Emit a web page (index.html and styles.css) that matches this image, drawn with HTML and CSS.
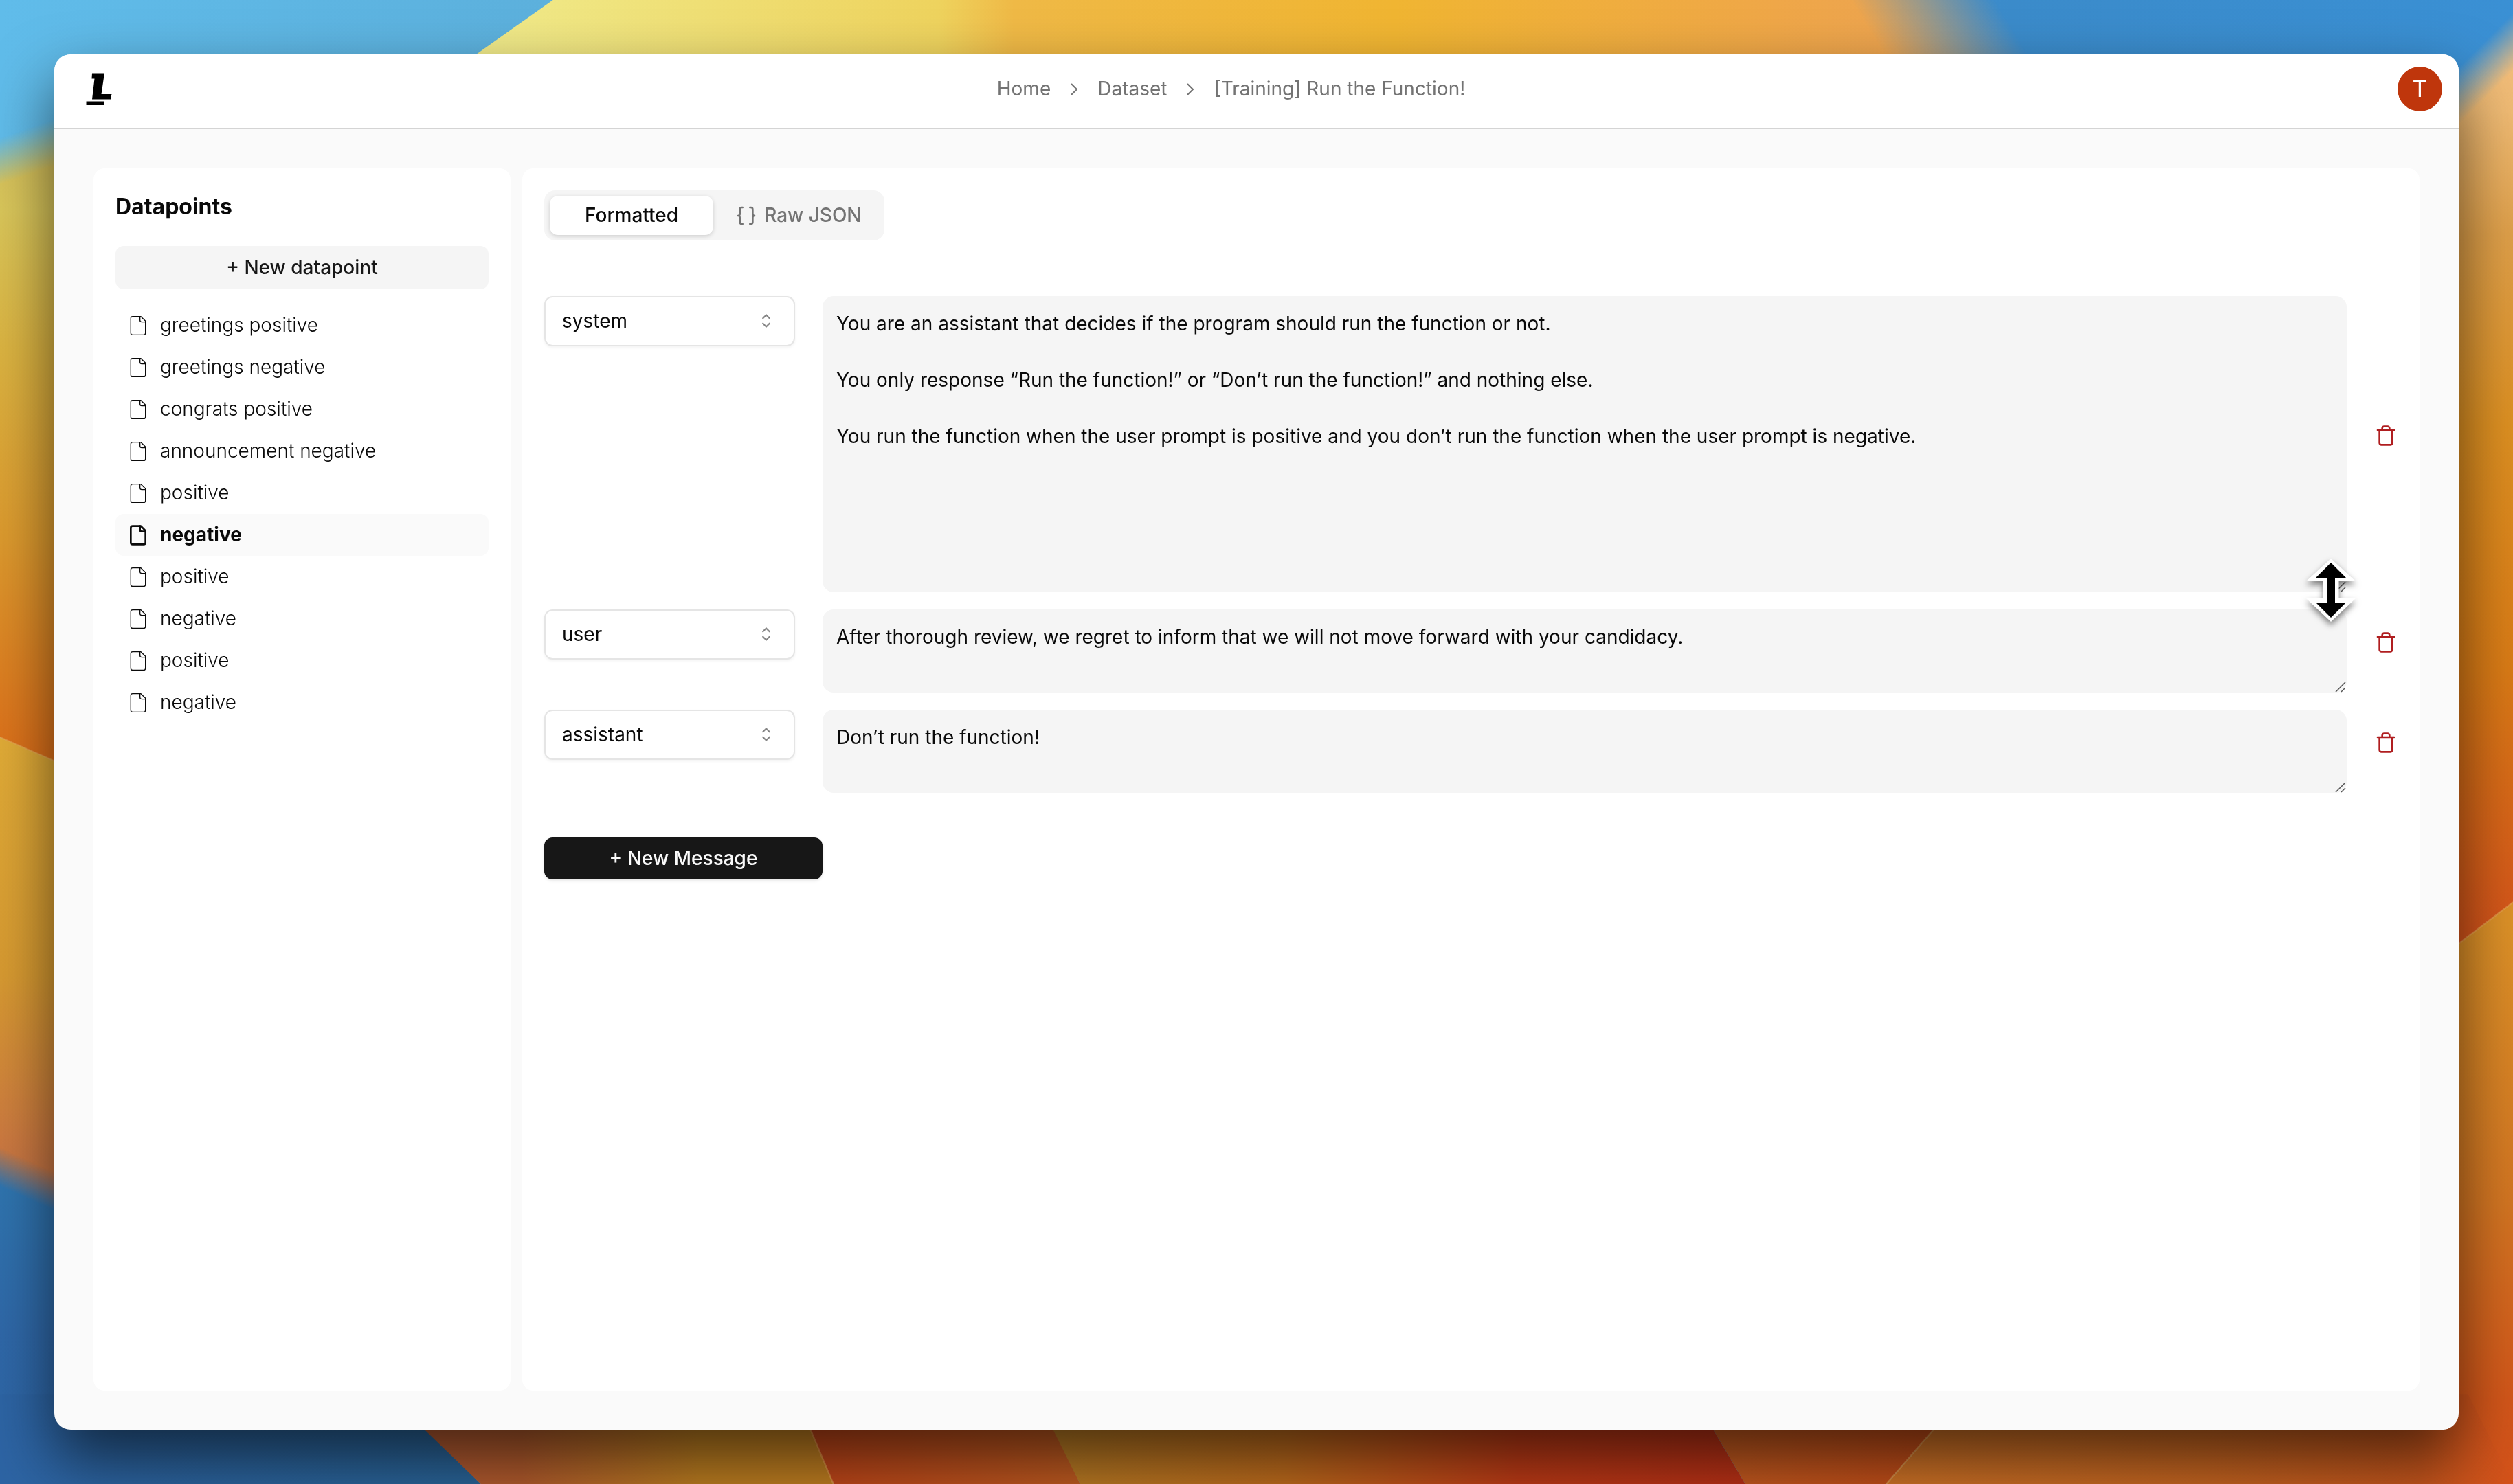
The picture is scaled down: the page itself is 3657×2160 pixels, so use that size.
FILE: index.html
```html
<!DOCTYPE html>
<html lang="en">
<head>
<meta charset="utf-8">
<title>[Training] Run the Function!</title>
<link rel="stylesheet" href="styles.css">
</head>
<body>
<svg class="wallpaper" viewBox="0 0 1568 926" preserveAspectRatio="none" aria-hidden="true">
  <defs>
    <linearGradient id="sky" x1="0" x2="1" y1="0" y2="0"><stop offset="0" stop-color="#60bcea"/><stop offset=".22" stop-color="#5cb0dc"/><stop offset=".8" stop-color="#3b8bca"/><stop offset="1" stop-color="#3a90d4"/></linearGradient>
    <linearGradient id="top" gradientUnits="userSpaceOnUse" x1="300" x2="1250" y1="0" y2="0"><stop offset="0" stop-color="#f0ea8a"/><stop offset=".3" stop-color="#eed35e"/><stop offset=".35" stop-color="#efb946"/><stop offset=".6" stop-color="#f0b532"/><stop offset=".85" stop-color="#efa748"/><stop offset="1" stop-color="#eba256"/></linearGradient>
    <linearGradient id="fade-top" gradientUnits="userSpaceOnUse" x1="1155" x2="1220" y1="0" y2="-40"><stop offset="0" stop-color="#fff"/><stop offset="1" stop-color="#000"/></linearGradient>
    <linearGradient id="fade-right" gradientUnits="userSpaceOnUse" x1="1543" x2="1561" y1="33" y2="51"><stop offset="0" stop-color="#000"/><stop offset="1" stop-color="#fff"/></linearGradient>
    <linearGradient id="fade-left" gradientUnits="userSpaceOnUse" x1="0" x2="9" y1="86" y2="112"><stop offset="0" stop-color="#000"/><stop offset="1" stop-color="#fff"/></linearGradient>
    <linearGradient id="fade-low" gradientUnits="userSpaceOnUse" x1="0" x2="-9" y1="716" y2="736"><stop offset="0" stop-color="#000"/><stop offset="1" stop-color="#fff"/></linearGradient>
    <mask id="m-top" maskUnits="userSpaceOnUse" x="0" y="0" width="1568" height="926"><rect width="1568" height="926" fill="url(#fade-top)"/></mask>
    <mask id="m-right" maskUnits="userSpaceOnUse" x="0" y="0" width="1568" height="926"><rect width="1568" height="926" fill="url(#fade-right)"/></mask>
    <mask id="m-left" maskUnits="userSpaceOnUse" x="0" y="0" width="1568" height="926"><rect width="1568" height="926" fill="url(#fade-left)"/></mask>
    <mask id="m-low" maskUnits="userSpaceOnUse" x="0" y="0" width="1568" height="926"><rect width="1568" height="926" fill="url(#fade-low)"/></mask>
    <linearGradient id="l1" gradientUnits="userSpaceOnUse" x1="4" x2="0" y1="84" y2="470"><stop offset="0" stop-color="#d3bd5c"/><stop offset=".12" stop-color="#d9c65a"/><stop offset=".35" stop-color="#dbb341"/><stop offset=".65" stop-color="#dc9a2e"/><stop offset="1" stop-color="#dc701a"/></linearGradient>
    <linearGradient id="l2" gradientUnits="userSpaceOnUse" x1="0" x2="-6" y1="465" y2="750"><stop offset="0" stop-color="#e0ab37"/><stop offset=".5" stop-color="#d79a31"/><stop offset=".86" stop-color="#cc7a40"/><stop offset="1" stop-color="#c07048"/></linearGradient>
    <linearGradient id="l3" x1="0" x2="0" y1="0" y2="1"><stop offset="0" stop-color="#2f7bb2"/><stop offset=".6" stop-color="#2f68a8"/><stop offset="1" stop-color="#2d64a4"/></linearGradient>
    <linearGradient id="l4" x1="0" x2="1" y1="0" y2="0"><stop offset="0" stop-color="#2d64a4"/><stop offset="1" stop-color="#296396"/></linearGradient>
    <linearGradient id="b1" x1="0" x2="1" y1="0" y2="0"><stop offset="0" stop-color="#b45a34"/><stop offset=".3" stop-color="#b05a2c"/><stop offset=".7" stop-color="#ba7c20"/><stop offset="1" stop-color="#bd7c20"/></linearGradient>
    <linearGradient id="b2" x1="0" x2="1" y1="0" y2="0"><stop offset="0" stop-color="#bd4318"/><stop offset="1" stop-color="#bd5a20"/></linearGradient>
    <linearGradient id="b3" x1="0" x2="1" y1="0" y2="0"><stop offset="0" stop-color="#b87c24"/><stop offset=".35" stop-color="#bc6a1c"/><stop offset=".68" stop-color="#bc3a16"/><stop offset="1" stop-color="#b83016"/></linearGradient>
    <linearGradient id="b4" x1="0" x2="1" y1="0" y2="0"><stop offset="0" stop-color="#c45c20"/><stop offset="1" stop-color="#be4816"/></linearGradient>
    <linearGradient id="r1" gradientUnits="userSpaceOnUse" x1="1545" x2="1568" y1="38" y2="580"><stop offset="0" stop-color="#f2bd7a"/><stop offset=".06" stop-color="#f0bb74"/><stop offset=".2" stop-color="#dfa04a"/><stop offset=".42" stop-color="#dd9022"/><stop offset=".7" stop-color="#d97b16"/><stop offset="1" stop-color="#d4541a"/></linearGradient>
    <linearGradient id="r2" gradientUnits="userSpaceOnUse" x1="0" x2="0" y1="575" y2="926"><stop offset="0" stop-color="#dc9128"/><stop offset=".5" stop-color="#d27522"/><stop offset=".85" stop-color="#d2561a"/><stop offset="1" stop-color="#d4521a"/></linearGradient>
    <linearGradient id="b5" gradientUnits="userSpaceOnUse" x1="1180" x2="1568" y1="0" y2="0"><stop offset="0" stop-color="#cd7226"/><stop offset=".5" stop-color="#c46420"/><stop offset=".85" stop-color="#c2541c"/><stop offset="1" stop-color="#d4521a"/></linearGradient>
  </defs>
  <rect width="1568" height="926" fill="url(#sky)"/>
  <path d="M345 0H1400V80H232z" fill="url(#top)" mask="url(#m-top)"/>
  <path d="M0 60H200V560L0 460z" fill="url(#l1)" mask="url(#m-left)"/>
  <path d="M0 460L60 486V790H0z" fill="url(#l2)"/>
  <path d="M0 690H60V926H0z" fill="url(#l3)" mask="url(#m-low)"/>
  <path d="M0 870H245L300 926H0z" fill="url(#l4)"/>
  <path d="M242 870H500L520 926H300z" fill="url(#b1)"/>
  <path d="M496 870H648L674 926H520z" fill="url(#b2)"/>
  <path d="M646 870H1056L1089 926H674z" fill="url(#b3)"/>
  <path d="M1056 870H1226L1177 926H1089z" fill="url(#b4)"/>
  <path d="M1500 0H1568V620H1500z" fill="url(#r1)" mask="url(#m-right)"/>
  <path d="M1568 563L1500 615V926H1568z" fill="url(#r2)"/>
  <path d="M1226 870H1540L1568 926H1177z" fill="url(#b5)"/>
  <g fill="none" stroke="#e8a95a" stroke-opacity=".55"><path d="M0 460L40 477.500M1568 563L1528 593.500M504 888L520 926M1210 888L1177 926"/></g>
</svg>

<div class="window">
  <header class="topbar">
    <a class="logo" href="#" aria-label="Dashboard">
      <svg viewBox="0 0 60 60" width="60" height="60" aria-hidden="true"><path d="M31 6.500H49L44.500 37H59.500L58 44.500H31L34.500 14.500H30.500zM22.500 47.500H48V53H22.500z"/></svg>
    </a>
    <nav class="crumbs" aria-label="Breadcrumb">
      <a href="#">Home</a>
      <svg class="chevron" viewBox="0 0 10 18" aria-hidden="true"><path d="M1 1l8 8-8 8"/></svg>
      <a href="#">Dataset</a>
      <svg class="chevron" viewBox="0 0 10 18" aria-hidden="true"><path d="M1 1l8 8-8 8"/></svg>
      <a href="#" aria-current="page">[Training] Run the Function!</a>
    </nav>
    <button class="avatar" type="button" aria-label="Account">T</button>
  </header>

  <main class="content">
    <aside class="card sidebar">
      <h2>Datapoints</h2>
      <button class="btn btn-soft" type="button">+ New datapoint</button>
      <ul class="points">
        <li><a href="#"><svg class="icon" viewBox="0 0 24 24"><use href="#file"/></svg>greetings positive</a></li>
        <li><a href="#"><svg class="icon" viewBox="0 0 24 24"><use href="#file"/></svg>greetings negative</a></li>
        <li><a href="#"><svg class="icon" viewBox="0 0 24 24"><use href="#file"/></svg>congrats positive</a></li>
        <li><a href="#"><svg class="icon" viewBox="0 0 24 24"><use href="#file"/></svg>announcement negative</a></li>
        <li><a href="#"><svg class="icon" viewBox="0 0 24 24"><use href="#file"/></svg>positive</a></li>
        <li><a class="active" href="#"><svg class="icon" viewBox="0 0 24 24"><use href="#file"/></svg>negative</a></li>
        <li><a href="#"><svg class="icon" viewBox="0 0 24 24"><use href="#file"/></svg>positive</a></li>
        <li><a href="#"><svg class="icon" viewBox="0 0 24 24"><use href="#file"/></svg>negative</a></li>
        <li><a href="#"><svg class="icon" viewBox="0 0 24 24"><use href="#file"/></svg>positive</a></li>
        <li><a href="#"><svg class="icon" viewBox="0 0 24 24"><use href="#file"/></svg>negative</a></li>
      </ul>
    </aside>

    <section class="card editor">
      <div class="tabs" role="tablist">
        <button class="tab selected" type="button" role="tab" aria-selected="true">Formatted</button>
        <button class="tab" type="button" role="tab" aria-selected="false"><svg class="icon" viewBox="0 0 24 24" aria-hidden="true"><path d="M8 3H7a2 2 0 0 0-2 2v5a2 2 0 0 1-2 2 2 2 0 0 1 2 2v5c0 1.100.9 2 2 2h1M16 21h1a2 2 0 0 0 2-2v-5c0-1.100.9-2 2-2a2 2 0 0 1-2-2V5a2 2 0 0 0-2-2h-1"/></svg>Raw JSON</button>
      </div>

      <div class="messages">
        <div class="message">
          <div class="role">
            <select aria-label="Role of message 1"><option selected>system</option><option>user</option><option>assistant</option></select>
            <svg viewBox="0 0 15 15" aria-hidden="true"><use href="#sort"/></svg>
          </div>
          <div class="field tall">
            <textarea aria-label="Message 1">You are an assistant that decides if the program should run the function or not.

You only response “Run the function!” or “Don’t run the function!” and nothing else.

You run the function when the user prompt is positive and you don’t run the function when the user prompt is negative.</textarea>
            <svg class="grip" viewBox="0 0 16 16" aria-hidden="true"><use href="#grip"/></svg>
            <svg class="pointer" viewBox="0 0 100 120" aria-hidden="true"><path d="M50 14L86 47H61.500V72H86L50 106 14 72H38.500V47H14z" fill="#fff"/><path d="M50 20L72 42H56V78H72L50 100 28 78H44V42H28z"/></svg>
          </div>
          <button class="trash" type="button" aria-label="Delete message 1"><svg class="icon" viewBox="0 0 24 24"><use href="#bin"/></svg></button>
        </div>

        <div class="message">
          <div class="role">
            <select aria-label="Role of message 2"><option>system</option><option selected>user</option><option>assistant</option></select>
            <svg viewBox="0 0 15 15" aria-hidden="true"><use href="#sort"/></svg>
          </div>
          <div class="field">
            <textarea aria-label="Message 2">After thorough review, we regret to inform that we will not move forward with your candidacy.</textarea>
            <svg class="grip" viewBox="0 0 16 16" aria-hidden="true"><use href="#grip"/></svg>
          </div>
          <button class="trash" type="button" aria-label="Delete message 2"><svg class="icon" viewBox="0 0 24 24"><use href="#bin"/></svg></button>
        </div>

        <div class="message">
          <div class="role">
            <select aria-label="Role of message 3"><option>system</option><option>user</option><option selected>assistant</option></select>
            <svg viewBox="0 0 15 15" aria-hidden="true"><use href="#sort"/></svg>
          </div>
          <div class="field">
            <textarea aria-label="Message 3">Don’t run the function!</textarea>
            <svg class="grip" viewBox="0 0 16 16" aria-hidden="true"><use href="#grip"/></svg>
          </div>
          <button class="trash" type="button" aria-label="Delete message 3"><svg class="icon" viewBox="0 0 24 24"><use href="#bin"/></svg></button>
        </div>
      </div>

      <button class="btn btn-dark" type="button">+ New Message</button>
    </section>
  </main>
</div>

<svg class="sprite" aria-hidden="true">
  <symbol id="file" viewBox="0 0 24 24"><path d="M15 2H6a2 2 0 0 0-2 2v16a2 2 0 0 0 2 2h12a2 2 0 0 0 2-2V7z"/><path d="M14 2v4a2 2 0 0 0 2 2h4"/></symbol>
  <symbol id="bin" viewBox="0 0 24 24"><path d="M3 6h18M19 6v14c0 1-1 2-2 2H7c-1 0-2-1-2-2V6M8 6V4c0-1 1-2 2-2h4c1 0 2 1 2 2v2"/></symbol>
  <symbol id="sort" viewBox="0 0 15 15"><path d="M5.250 5.750L7.500 3.500l2.250 2.250M5.250 9.250L7.500 11.500l2.250-2.250"/></symbol>
  <symbol id="grip" viewBox="0 0 16 16"><path d="M1 15L15 1M9 15l6-6"/></symbol>
</svg>
</body>
</html>
```
FILE: styles.css
```css
*,
*::before,
*::after {
  box-sizing: border-box;
}

body {
  display: flex;
  min-height: 100vh;
  margin: 0;
  padding: 79px;
  font: 400 28px/41px Inter, sans-serif;
  color: #0a0a0a;
}

button,
select,
textarea {
  margin: 0;
  border: 0;
  font: inherit;
  color: inherit;
}

a {
  color: inherit;
  text-decoration: none;
}

.sprite {
  position: absolute;
  width: 0;
  height: 0;
}

.wallpaper {
  position: fixed;
  inset: 0;
  z-index: -1;
  width: 100%;
  height: 100%;
}

.icon {
  flex: none;
  width: 32px;
  height: 32px;
  fill: none;
  stroke: currentColor;
  stroke-width: 2;
  stroke-linecap: round;
  stroke-linejoin: round;
}

.window {
  display: flex;
  flex: 1;
  flex-direction: column;
  min-width: 0;
  overflow: hidden;
  border-radius: 24px;
  background: #fafafa;
  box-shadow: 0 42px 90px rgba(0, 0, 0, 0.6);
}

/* Top bar */

.topbar {
  display: grid;
  grid-template-columns: 1fr auto 1fr;
  align-items: center;
  height: 109px;
  padding: 0 24px 6px;
  border-bottom: 2px solid #d4d4d4;
  background: #fff;
}

.logo {
  display: flex;
  justify-self: start;
}

.crumbs {
  display: flex;
  align-items: center;
  gap: 29px;
  padding-right: 74px;
  color: #737373;
}

.chevron {
  width: 10px;
  height: 18px;
  fill: none;
  stroke: currentColor;
  stroke-width: 2;
}

.avatar {
  justify-self: end;
  width: 65px;
  height: 65px;
  padding: 0;
  border-radius: 50%;
  background: #bf360c;
  color: #fff;
  font-family: Roboto, sans-serif;
  font-size: 34px;
}

/* Panels */

.content {
  display: flex;
  flex: 1;
  gap: 17px;
  padding: 57px;
}

.card {
  padding: 32px;
  border-radius: 16px;
  background: #fff;
}

.sidebar {
  flex: none;
  width: 607px;
}

.sidebar h2 {
  margin: 0 0 33px;
  font-size: 32px;
  font-weight: 700;
  line-height: 48px;
}

.btn {
  border-radius: 12px;
  font-weight: 500;
}

.btn-soft {
  width: 100%;
  height: 63px;
  background: #f5f5f5;
  color: #171717;
}

.btn-dark {
  width: 405px;
  height: 61px;
  background: #171717;
  color: #fafafa;
  box-shadow: 0 2px 4px rgba(0, 0, 0, 0.1);
}

.points {
  margin: 22px 0 0;
  padding: 0;
  list-style: none;
}

.points a {
  display: flex;
  align-items: center;
  gap: 16px;
  height: 61px;
  padding: 0 17px;
  border-radius: 12px;
  font-weight: 300;
}

.points .icon {
  stroke-width: 1;
}

.points .active {
  background: #fafafa;
  font-weight: 700;
}

.points .active .icon {
  stroke-width: 2;
}

/* Editor */

.editor {
  display: flex;
  flex: 1;
  flex-direction: column;
  align-items: flex-start;
  min-width: 0;
}

.tabs {
  display: flex;
  padding: 8px;
  border-radius: 16px;
  background: #f5f5f5;
}

.tab {
  display: flex;
  align-items: center;
  gap: 10px;
  height: 57px;
  padding: 0 25px 0 32px;
  border-radius: 12px;
  background: none;
  color: #737373;
  font-weight: 500;
}

.tab.selected {
  padding: 0 51px;
  background: #fff;
  color: #0a0a0a;
  box-shadow: 0 2px 6px rgba(0, 0, 0, 0.16);
}

.messages {
  display: flex;
  flex-direction: column;
  gap: 25px;
  width: 100%;
  margin: 81px 0 65px;
}

.message {
  display: grid;
  grid-template-columns: 365px 1fr 34px;
  gap: 40px;
  align-items: start;
}

.role {
  position: relative;
}

.role select {
  display: block;
  width: 100%;
  height: 73px;
  padding: 0 64px 0 24px;
  border: 2px solid #e5e5e5;
  border-radius: 12px;
  background: #fff;
  box-shadow: 0 2px 4px rgba(0, 0, 0, 0.05);
  appearance: none;
}

.role svg {
  position: absolute;
  top: 20px;
  right: 26px;
  width: 32px;
  height: 32px;
  fill: none;
  stroke: #858585;
  stroke-linecap: round;
  pointer-events: none;
}

.field {
  position: relative;
  height: 121px;
}

.field.tall {
  height: 431px;
}

.field textarea {
  display: block;
  width: 100%;
  height: 100%;
  padding: 20px;
  border-radius: 16px;
  background: #f5f5f5;
  resize: none;
}

.grip {
  position: absolute;
  right: 1px;
  bottom: 0;
  width: 16px;
  height: 16px;
  stroke: #555;
  stroke-width: 1.5;
}

.pointer {
  position: absolute;
  right: -27px;
  bottom: -57px;
  z-index: 1;
  width: 100px;
  height: 120px;
  filter: drop-shadow(0 5px 5px rgba(0, 0, 0, 0.5));
}

.trash {
  display: flex;
  align-self: center;
  justify-content: center;
  margin-bottom: 26px;
  padding: 0;
  background: none;
  color: #b01e20;
}
```
